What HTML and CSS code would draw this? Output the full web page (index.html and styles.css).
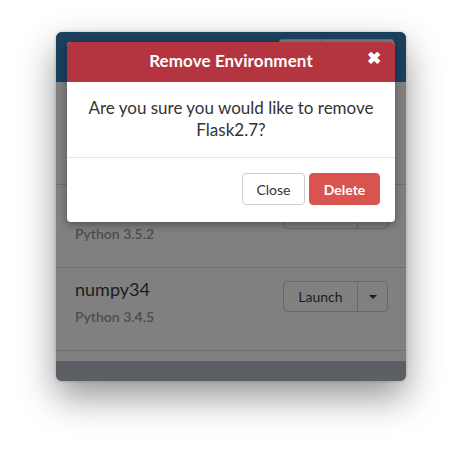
FILE: index.html
```html
<!DOCTYPE html>
<html>
<head>
<meta charset="utf-8">
<link rel="stylesheet" href="styles.css">
</head>
<body>
<div class="window">
  <div class="appbar">
    <div class="btn-group top-group">
      <span class="seg seg-a"></span><span class="seg seg-b"></span>
    </div>
  </div>
  <div class="list">
    <div class="row row-first"></div>
    <div class="row">
      <div class="info">
        <div class="name covered">Flask3.5</div>
        <div class="sub">Python 3.5.2</div>
      </div>
      <div class="btn-group launch-group">
        <span class="launch"></span><span class="caret-btn"></span>
      </div>
    </div>
    <div class="row">
      <div class="info">
        <div class="name">numpy34</div>
        <div class="sub">Python 3.4.5</div>
      </div>
      <div class="btn-group launch-group">
        <span class="launch">Launch</span><span class="caret-btn"><span class="caret"></span></span>
      </div>
    </div>
    <div class="row row-last"></div>
  </div>
  <div class="footer-bar"></div>

  <div class="modal">
    <div class="modal-header">
      <span class="modal-title">Remove Environment</span>
      <span class="modal-close">&#x2716;</span>
    </div>
    <div class="modal-body">Are you sure you would like to remove Flask2.7?</div>
    <div class="modal-footer">
      <button class="btn btn-close">Close</button>
      <button class="btn btn-delete">Delete</button>
    </div>
  </div>
</div>
</body>
</html>
```
FILE: styles.css
```css
html, body {
  margin: 0;
  padding: 0;
  background: #ffffff;
}
body {
  font-family: Lato, "Open Sans", sans-serif;
  min-height: 462px;
  padding-top: 32px;
  box-sizing: border-box;
}
.window {
  position: relative;
  margin: 0 0 0 56px;
  width: 350px;
  height: 349px;
  border-radius: 6px;
  overflow: hidden;
  background: #808080;
  box-shadow: 0 16px 36px rgba(0, 0, 0, 0.42), 0 0 3px rgba(0, 0, 0, 0.25);
  display: flex;
  flex-direction: column;
}
.appbar {
  height: 50px;
  flex: none;
  background: #1a405c;
  display: flex;
  justify-content: flex-end;
  align-items: flex-start;
  padding: 7px 12px 0 0;
  box-sizing: border-box;
}
.top-group {
  display: flex;
  height: 30px;
}
.seg {
  background: #7a7a7a;
  border: 1px solid #6a6a6a;
  border-radius: 3px;
}
.seg-a { width: 40px; border-radius: 3px 0 0 3px; }
.seg-b { width: 72px; border-left: none; border-radius: 0 3px 3px 0; }

.list {
  flex: 1;
  display: flex;
  flex-direction: column;
}
.row {
  height: 83px;
  flex: none;
  border-bottom: 1px solid #6f6f6f;
  display: flex;
  justify-content: space-between;
  align-items: flex-start;
  padding: 9px 18px 0 19px;
  box-sizing: border-box;
}
.row-first { height: 103px; }
.row-last { height: 10px; border-bottom: none; }
.name {
  font-size: 18px;
  color: #1c1c1c;
  line-height: 22px;
  margin-top: 1px;
}
.covered { visibility: hidden; }
.sub {
  font-size: 14px;
  font-weight: 600;
  color: #4d4d4d;
  line-height: 18px;
  margin-top: 8px;
}
.btn-group.launch-group {
  display: flex;
  height: 31px;
  border: 1px solid #686868;
  border-radius: 4px;
  box-sizing: border-box;
  margin-top: 4px;
}
.launch {
  width: 73px;
  display: flex;
  align-items: center;
  justify-content: center;
  font-size: 14px;
  color: #1c1c1c;
  border-right: 1px solid #686868;
}
.caret-btn {
  width: 29px;
  display: flex;
  align-items: center;
  justify-content: center;
}
.caret {
  width: 0;
  height: 0;
  border-left: 4px solid transparent;
  border-right: 4px solid transparent;
  border-top: 4px solid #1c1c1c;
}
.footer-bar {
  height: 20px;
  flex: none;
  background: #5c6064;
}

.modal {
  position: absolute;
  left: 11px;
  top: 10px;
  width: 328px;
  height: 180px;
  background: #ffffff;
  border-radius: 4px;
  box-shadow: 0 3px 8px rgba(0, 0, 0, 0.35);
  overflow: hidden;
  display: flex;
  flex-direction: column;
}
.modal-header {
  height: 40px;
  flex: none;
  background: #b4343f;
  color: #ffffff;
  display: flex;
  align-items: center;
  justify-content: center;
  position: relative;
  padding-bottom: 3px;
  box-sizing: border-box;
}
.modal-title {
  font-size: 17px;
  font-weight: 700;
  letter-spacing: 0.1px;
}
.modal-close {
  position: absolute;
  right: 14px;
  top: 6px;
  font-size: 17px;
  font-weight: 700;
  line-height: 20px;
}
.modal-body {
  height: 76px;
  flex: none;
  box-sizing: border-box;
  padding: 15px 12px 0;
  text-align: center;
  font-size: 17px;
  line-height: 22px;
  color: #333333;
  border-bottom: 1px solid #e5e5e5;
}
.modal-footer {
  flex: 1;
  display: flex;
  justify-content: flex-end;
  align-items: flex-start;
  gap: 4px;
  padding: 15px 15px 0 0;
}
.btn {
  height: 32px;
  border-radius: 4px;
  font-family: Lato, "Open Sans", sans-serif;
  font-size: 14px;
  padding: 0;
  margin: 0;
}
.btn-close {
  width: 63px;
  background: #ffffff;
  border: 1px solid #cccccc;
  color: #333333;
}
.btn-delete {
  width: 71px;
  background: #d9534f;
  border: 1px solid #d9534f;
  color: #ffffff;
  font-weight: 700;
}
```
